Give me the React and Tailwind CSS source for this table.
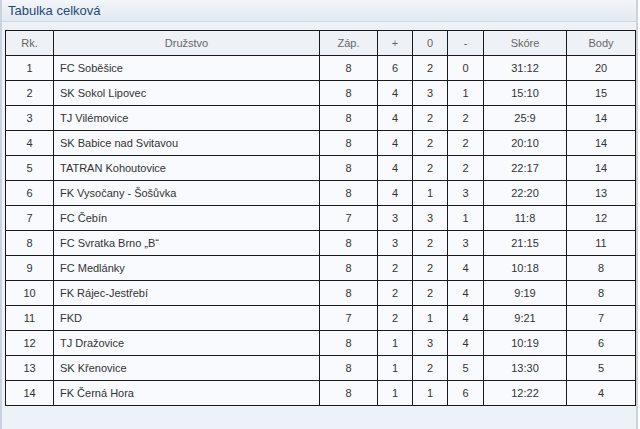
const ROWS = [
  [1, "FC Soběšice", 8, 6, 2, 0, "31:12", 20],
  [2, "SK Sokol Lipovec", 8, 4, 3, 1, "15:10", 15],
  [3, "TJ Vilémovice", 8, 4, 2, 2, "25:9", 14],
  [4, "SK Babice nad Svitavou", 8, 4, 2, 2, "20:10", 14],
  [5, "TATRAN Kohoutovice", 8, 4, 2, 2, "22:17", 14],
  [6, "FK Vysočany - Šošůvka", 8, 4, 1, 3, "22:20", 13],
  [7, "FC Čebín", 7, 3, 3, 1, "11:8", 12],
  [8, "FC Svratka Brno „B“", 8, 3, 2, 3, "21:15", 11],
  [9, "FC Medlánky", 8, 2, 2, 4, "10:18", 8],
  [10, "FK Rájec-Jestřebí", 8, 2, 2, 4, "9:19", 8],
  [11, "FKD", 7, 2, 1, 4, "9:21", 7],
  [12, "TJ Dražovice", 8, 1, 3, 4, "10:19", 6],
  [13, "SK Křenovice", 8, 1, 2, 5, "13:30", 5],
  [14, "FK Černá Hora", 8, 1, 1, 6, "12:22", 4],
];

const COLS = [
  { label: "Rk.", w: "w-[48px]" },
  { label: "Družstvo", w: "w-[266px]" },
  { label: "Záp.", w: "w-[58px]" },
  { label: "+", w: "w-[35px]" },
  { label: "0", w: "w-[35px]" },
  { label: "-", w: "w-[36px]" },
  { label: "Skóre", w: "w-[83px]" },
  { label: "Body", w: "w-[69px]" },
];

export default function App() {
  return (
    <div className="w-[640px] h-[429px] bg-white font-['Liberation_Sans',Arial,sans-serif] overflow-hidden">
      <div className="w-[638px] h-full flex flex-col border-x-2 border-[#c9d2dd] bg-[#edf2f8]">
        {/* title bar */}
        <div className="h-[22px] flex-shrink-0 flex items-center px-[6px] bg-gradient-to-b from-[#f2f5f9] to-[#e3e9f1] border-b border-[#cfd8e3]">
          <span className="text-[13px] text-[#1d4a7a] leading-none">Tabulka celková</span>
        </div>

        <div className="pt-[8px] pl-[3px]">
          <table className="table-fixed border-collapse w-[630px] text-[11px]">
            <thead>
              <tr className="h-[25px] bg-[#eef1f6]">
                {COLS.map((c) => (
                  <th key={c.label} className={`${c.w} border border-[#1a1a1a] font-normal text-[#666] text-center p-0`}>
                    {c.label}
                  </th>
                ))}
              </tr>
            </thead>
            <tbody>
              {ROWS.map((r) => (
                <tr key={r[0]} className="h-[25px] bg-[#f8fafd] text-[#333]">
                  {r.map((v, i) => (
                    <td key={i} className={`border border-[#1a1a1a] p-0 ${i === 1 ? "text-left pl-[6px]" : "text-center"}`}>
                      {v}
                    </td>
                  ))}
                </tr>
              ))}
            </tbody>
          </table>
        </div>
      </div>
    </div>
  );
}
